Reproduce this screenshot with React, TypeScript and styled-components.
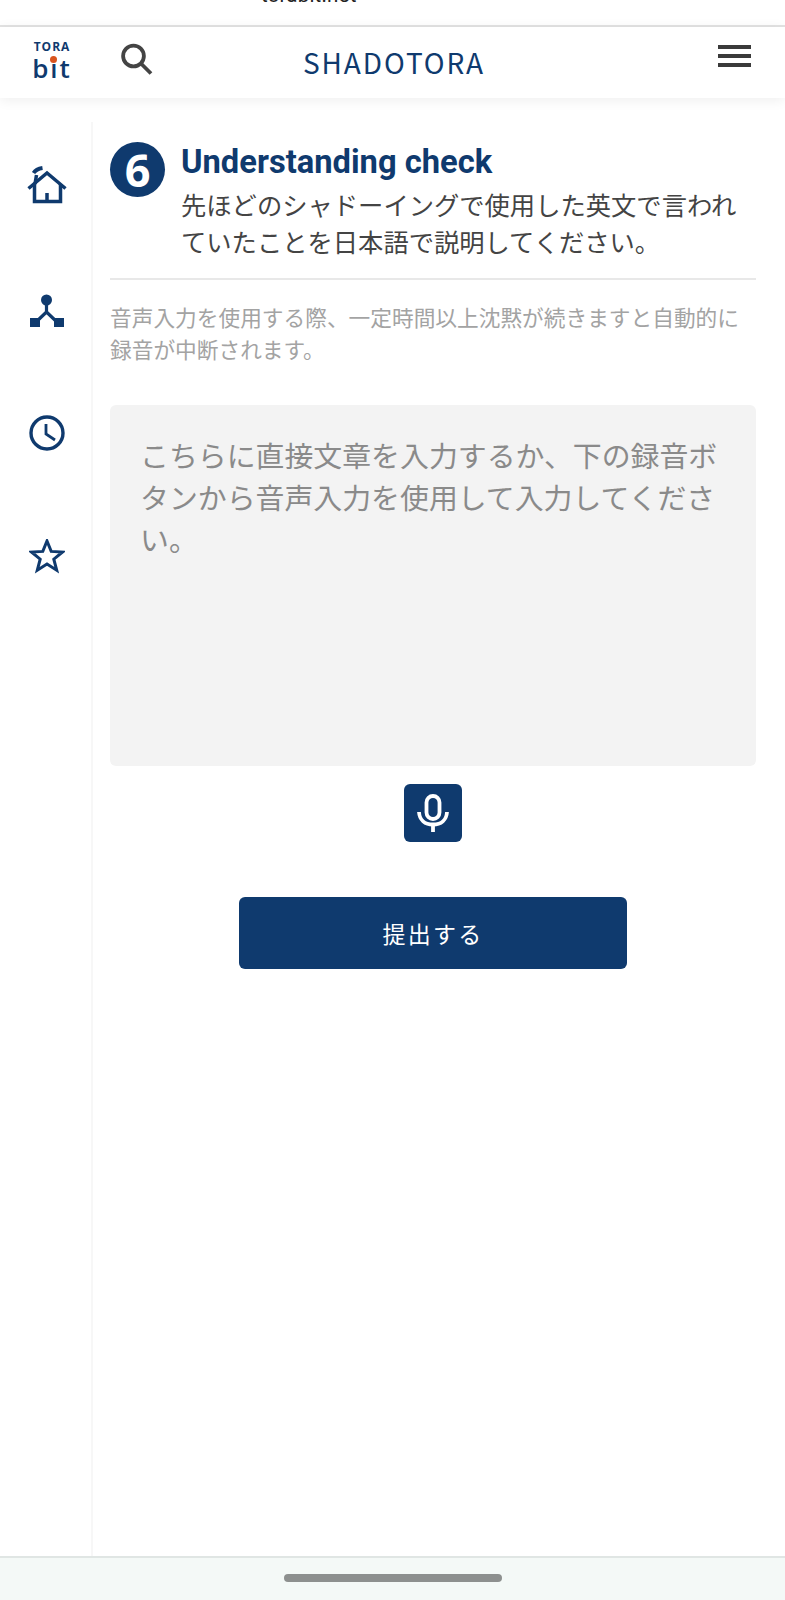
import React from "react";
import styled, { createGlobalStyle } from "styled-components";

const navy = "#0f3a6e";

const GlobalStyle = createGlobalStyle`
  html, body {
    margin: 0;
    padding: 0;
    background: #fff;
    font-family: Roboto, "Noto Sans CJK JP", sans-serif;
  }
  * { box-sizing: border-box; }
`;

const Page = styled.div`
  width: 785px;
  height: 1600px;
  display: flex;
  flex-direction: column;
  overflow: hidden;
  background: #fff;
`;

const UrlBar = styled.div`
  height: 27px;
  flex: none;
  overflow: hidden;
  border-bottom: 2px solid #e3e3e3;
  padding-left: 261px;
`;

const UrlText = styled.div`
  margin-top: -17px;
  font-size: 20.5px;
  line-height: 24px;
  letter-spacing: 0.2px;
  color: #222;
`;

const Header = styled.header`
  height: 71px;
  flex: none;
  position: relative;
  z-index: 2;
  display: flex;
  align-items: flex-start;
  background: #fff;
  box-shadow: 0 2px 12px rgba(0, 0, 0, 0.07);
`;

const Logo = styled.div`
  width: 36px;
  margin: 14px 0 0 34px;
  display: flex;
  flex-direction: column;
  align-items: center;
  color: ${navy};
`;

const LogoTop = styled.div`
  font-family: "Open Sans", sans-serif;
  font-size: 12px;
  font-weight: 700;
  letter-spacing: 1px;
  line-height: 12px;
  white-space: nowrap;
`;

const LogoBottom = styled.div`
  font-family: "Open Sans", sans-serif;
  font-size: 26px;
  font-weight: 600;
  letter-spacing: 2px;
  line-height: 26px;
  margin-top: 2px;
  position: relative;
  white-space: nowrap;
`;

const LogoDot = styled.span`
  position: absolute;
  left: 18px;
  top: 1px;
  width: 7px;
  height: 7px;
  border-radius: 50%;
  background: #d9541e;
`;

const SearchButton = styled.div`
  margin: 14px 0 0 48px;
  width: 36px;
  height: 36px;
  display: flex;
  align-items: center;
  justify-content: center;
`;

const Brand = styled.div`
  position: absolute;
  left: 303px;
  top: 17px;
  font-family: "Noto Sans CJK JP", sans-serif;
  font-size: 28px;
  line-height: 36px;
  letter-spacing: 1.9px;
  color: ${navy};
`;

const MenuButton = styled.div`
  margin: 18px 34px 0 auto;
  width: 33px;
  display: flex;
  flex-direction: column;
  gap: 5px;
`;

const MenuLine = styled.span`
  display: block;
  height: 4px;
  background: #3a3a3a;
`;

const Body = styled.div`
  flex: 1;
  display: flex;
  min-height: 0;
  padding-top: 24px;
`;

const Sidebar = styled.nav`
  width: 93px;
  flex: none;
  border-right: 2px solid #f7f7f7;
  display: flex;
  flex-direction: column;
  align-items: center;
  gap: 88px;
  padding: 45px 0 0 3px;
`;

const NavIcon = styled.div`
  width: 36px;
  height: 36px;
  display: flex;
  align-items: center;
  justify-content: center;
`;

const Main = styled.main`
  flex: 1;
  padding: 20px 29px 0 17px;
  display: flex;
  flex-direction: column;
`;

const StepHeader = styled.div`
  display: flex;
  gap: 16px;
  padding-bottom: 16px;
  border-bottom: 2px solid #e8e8e8;
`;

const StepBadge = styled.div`
  width: 55px;
  height: 55px;
  flex: none;
  border-radius: 50%;
  background: ${navy};
  color: #fff;
  font-family: "Open Sans", sans-serif;
  font-weight: 700;
  font-size: 45px;
  line-height: 55px;
  text-align: center;
`;

const StepTitle = styled.h1`
  margin: 1px 0 0;
  font-size: 32.7px;
  font-weight: 700;
  line-height: 38px;
  white-space: nowrap;
  color: ${navy};
`;

const StepText = styled.p`
  margin: 7px 0 0;
  font-size: 25.3px;
  line-height: 37px;
  color: #444;
`;

const Note = styled.p`
  margin: 23px 0 0;
  font-size: 21.7px;
  line-height: 32px;
  color: #a3a3a3;
`;

const Answer = styled.div`
  margin-top: 38px;
  height: 361px;
  padding: 31px 30px;
  border-radius: 6px;
  background: #f3f3f3;
  font-size: 28.9px;
  line-height: 42px;
  color: #8a8a8a;
`;

const MicRow = styled.div`
  margin-top: 18px;
  display: flex;
  justify-content: center;
`;

const MicButton = styled.button`
  width: 58px;
  height: 58px;
  border: none;
  padding: 0;
  border-radius: 6px;
  background: ${navy};
  display: flex;
  align-items: center;
  justify-content: center;
`;

const SubmitRow = styled.div`
  margin-top: 55px;
  display: flex;
  justify-content: center;
`;

const SubmitButton = styled.button`
  width: 388px;
  height: 72px;
  border: none;
  border-radius: 6px;
  background: ${navy};
  color: #fff;
  font-family: Roboto, "Noto Sans CJK JP", sans-serif;
  font-size: 23px;
  letter-spacing: 2.2px;
`;

const HomeBar = styled.div`
  height: 44px;
  flex: none;
  border-top: 2px solid #e0e6e4;
  background: #f4f9f7;
  display: flex;
  justify-content: center;
  padding-top: 16px;
`;

const HomeHandle = styled.span`
  width: 218px;
  height: 8px;
  border-radius: 4px;
  background: #8d908f;
`;

const App = () => {
  return (
    <Page>
      <GlobalStyle />
      <UrlBar>
        <UrlText>torabit.net</UrlText>
      </UrlBar>

      <Header>
        <Logo>
          <LogoTop>TORA</LogoTop>
          <LogoBottom>
            bit
            <LogoDot />
          </LogoBottom>
        </Logo>
        <SearchButton>
          <svg width="36" height="36" viewBox="0 0 36 36" fill="none" stroke="#444" strokeWidth="3.8">
            <circle cx="15.5" cy="15" r="10.4" />
            <path d="M23 22.5 L33 32.5" />
          </svg>
        </SearchButton>
        <Brand>SHADOTORA</Brand>
        <MenuButton>
          <MenuLine />
          <MenuLine />
          <MenuLine />
        </MenuButton>
      </Header>

      <Body>
        <Sidebar>
          <NavIcon>
            <svg width="40" height="38" viewBox="0 0 40 38" fill="none" stroke={navy} strokeWidth="3.5" style={{ flex: "none" }}>
              <path d="M1.5 22.5 L20 7 L38.5 22.5" />
              <path d="M7.5 18 V35.5 H33.5 V18" />
              <path d="M20 35 V27" />
              <path d="M8 18 L9.5 9" />
              <path d="M6.5 7 Q9 3 15.5 2" strokeWidth="3.8" />
            </svg>
          </NavIcon>
          <NavIcon>
            <svg width="36" height="36" viewBox="0 0 36 36" fill={navy} stroke={navy}>
              <circle cx="17.5" cy="9" r="5.5" stroke="none" />
              <rect x="1" y="27" width="10" height="9" stroke="none" />
              <rect x="25" y="27" width="10" height="9" stroke="none" />
              <path d="M17.5 12 V21 L6 32 M17.5 21 L29 32" fill="none" strokeWidth="3.2" />
            </svg>
          </NavIcon>
          <NavIcon>
            <svg width="36" height="36" viewBox="0 0 36 36" fill="none" stroke={navy} strokeWidth="3.4">
              <circle cx="18" cy="18" r="16" />
              <path d="M17 9 V19 L26 25" strokeWidth="2.8" />
            </svg>
          </NavIcon>
          <NavIcon>
            <svg width="36" height="36" viewBox="0 2 36 36" fill="none" stroke={navy} strokeWidth="3">
              <path d="M18 4 L22.2 14.4 L33.5 15 L24.8 22.2 L27.7 33.2 L18 27.1 L8.3 33.2 L11.2 22.2 L2.5 15 L13.8 14.4 Z" />
            </svg>
          </NavIcon>
        </Sidebar>

        <Main>
          <StepHeader>
            <StepBadge>6</StepBadge>
            <div>
              <StepTitle>Understanding check</StepTitle>
              <StepText>
                先ほどのシャドーイングで使用した英文で言われていたことを日本語で説明してください。
              </StepText>
            </div>
          </StepHeader>
          <Note>
            音声入力を使用する際、一定時間以上沈黙が続きますと自動的に録音が中断されます。
          </Note>
          <Answer>
            こちらに直接文章を入力するか、下の録音ボタンから音声入力を使用して入力してください。
          </Answer>
          <MicRow>
            <MicButton>
              <svg width="32" height="38" viewBox="0 0 32 38" fill="none" stroke="#fff" strokeWidth="3.8">
                <rect x="9.5" y="2" width="13" height="23" rx="6.5" />
                <path d="M2 18 C2.5 26 8 30.5 16 30.5 C24 30.5 29.5 26 30 18" />
                <path d="M16 30 V38" />
              </svg>
            </MicButton>
          </MicRow>
          <SubmitRow>
            <SubmitButton>提出する</SubmitButton>
          </SubmitRow>
        </Main>
      </Body>

      <HomeBar>
        <HomeHandle />
      </HomeBar>
    </Page>
  );
};

export default App;
